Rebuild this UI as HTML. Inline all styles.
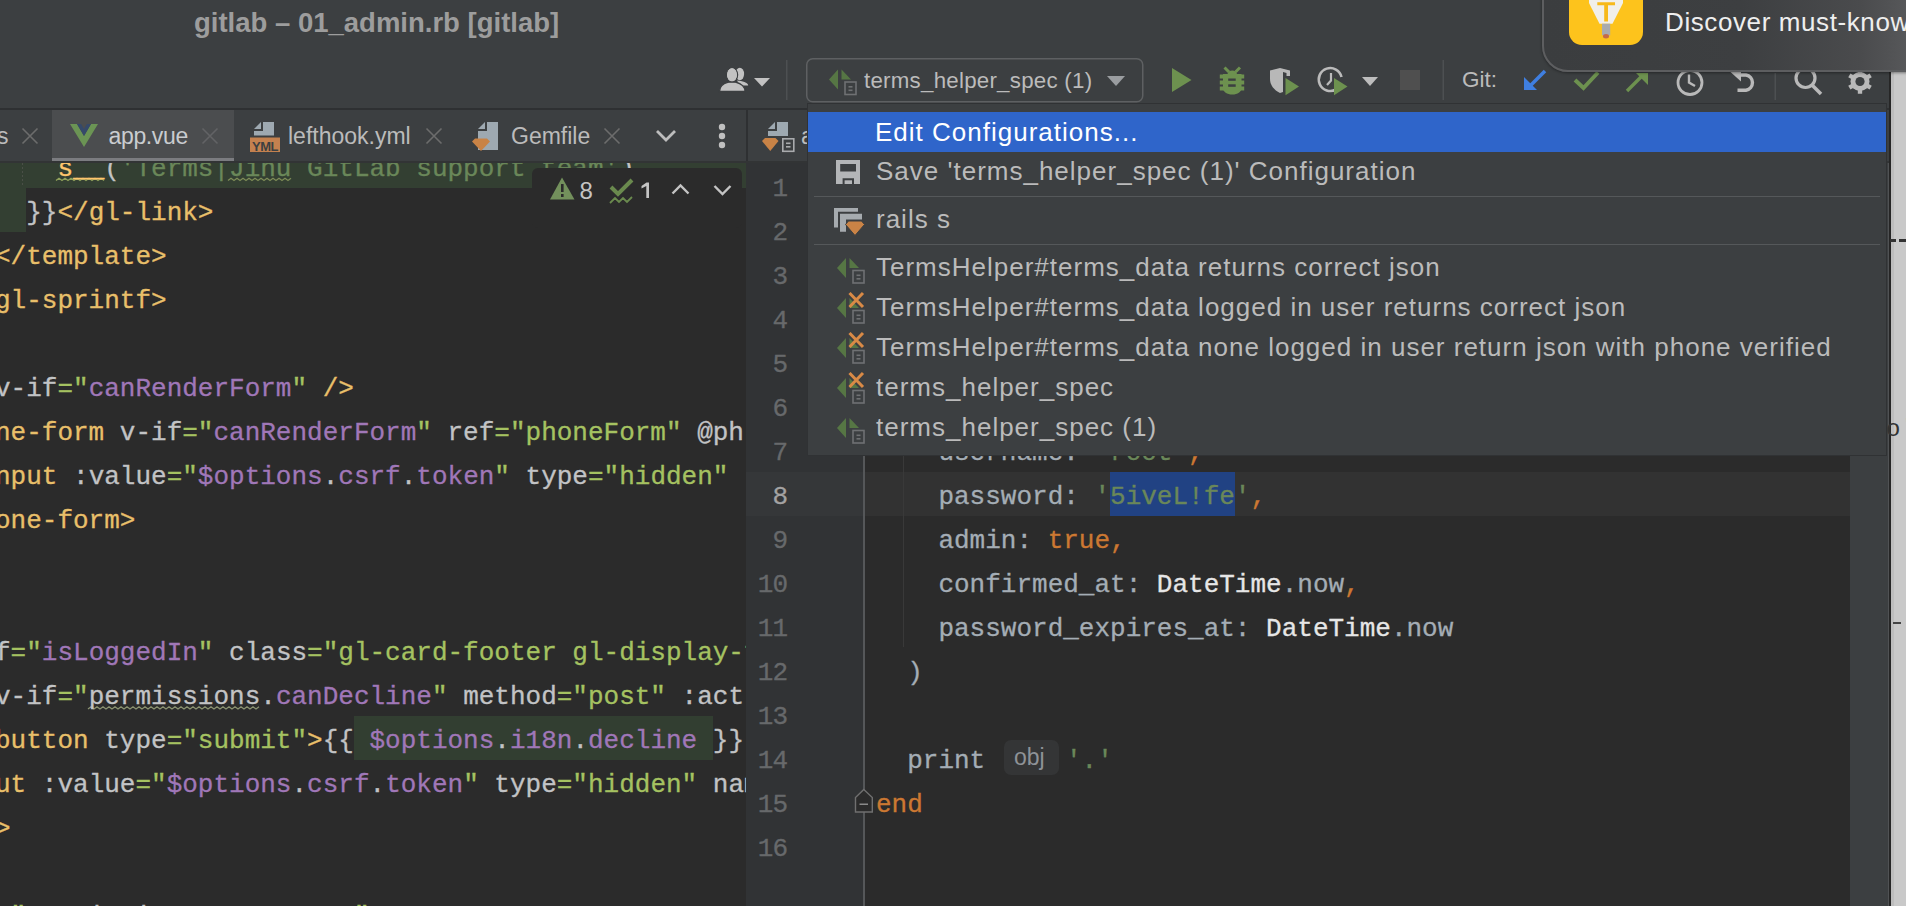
<!DOCTYPE html>
<html><head><meta charset="utf-8">
<style>
*{margin:0;padding:0;box-sizing:border-box}
html,body{width:1906px;height:906px;overflow:hidden;background:#3c3f41}
body{position:relative;font-family:"Liberation Sans",sans-serif;color:#bbbbbb}
.a{position:absolute}
.mono{font-family:"Liberation Mono",monospace;font-size:26px;line-height:44px;white-space:pre;-webkit-text-stroke:0.3px currentColor}
.ui{font-family:"Liberation Sans",sans-serif;white-space:pre}
svg{position:absolute;overflow:visible}
</style></head>
<body>
<!-- left editor -->
<div id="le" class="a" style="left:0;top:163px;width:746px;height:743px;background:#2b2b2b;overflow:hidden">
<div class="a" style="left:0;top:0;width:746px;height:24.5px;background:#333f32"></div>
<div class="a" style="left:0;top:24.5px;width:26px;height:44px;background:#333f32"></div>
<div class="a" style="left:353.8px;top:552.5px;width:358.8px;height:44px;background:#323e31"></div>
<svg class="a" style="left:0;top:0" width="746" height="743">
<path d="M56 17.5 L59.0 15.3 L62.0 17.5 L65.0 15.3 L68.0 17.5 L71.0 15.3 L74.0 17.5 L77.0 15.3 L80.0 17.5 L83.0 15.3 L86.0 17.5 L89.0 15.3 L92.0 17.5 L95.0 15.3 L98.0 17.5 L101.0 15.3 L104.0 17.5" fill="none" stroke="#8fa05a" stroke-width="1.3"/>
<path d="M228 17.5 L231.0 15.3 L234.0 17.5 L237.0 15.3 L240.0 17.5 L243.0 15.3 L246.0 17.5 L249.0 15.3 L252.0 17.5 L255.0 15.3 L258.0 17.5 L261.0 15.3 L264.0 17.5 L267.0 15.3 L270.0 17.5 L273.0 15.3 L276.0 17.5 L279.0 15.3 L282.0 17.5 L285.0 15.3 L288.0 17.5 L291.0 15.3" fill="none" stroke="#7c8a56" stroke-width="1.3"/>
<path d="M88 546 L91.0 543.8 L94.0 546 L97.0 543.8 L100.0 546 L103.0 543.8 L106.0 546 L109.0 543.8 L112.0 546 L115.0 543.8 L118.0 546 L121.0 543.8 L124.0 546 L127.0 543.8 L130.0 546 L133.0 543.8 L136.0 546 L139.0 543.8 L142.0 546 L145.0 543.8 L148.0 546 L151.0 543.8 L154.0 546 L157.0 543.8 L160.0 546 L163.0 543.8 L166.0 546 L169.0 543.8 L172.0 546 L175.0 543.8 L178.0 546 L181.0 543.8 L184.0 546 L187.0 543.8 L190.0 546 L193.0 543.8 L196.0 546 L199.0 543.8 L202.0 546 L205.0 543.8 L208.0 546 L211.0 543.8 L214.0 546 L217.0 543.8 L220.0 546 L223.0 543.8 L226.0 546 L229.0 543.8 L232.0 546 L235.0 543.8 L238.0 546 L241.0 543.8 L244.0 546 L247.0 543.8 L250.0 546 L253.0 543.8 L256.0 546 L259.0 543.8" fill="none" stroke="#8a9270" stroke-width="1.3"/>
<path d="M22.5 0 L22.5 24" stroke="#4a4f47" stroke-width="1" stroke-dasharray="2 2"/>
</svg>
<div class="a mono" style="left:-5.0px;top:-16.5px"><span style="color:#c2c3c5">    </span><span style="color:#ffc66d">s__</span><span style="color:#c2c3c5">(</span><span style="color:#6a8759">&#x27;Terms|Jihu GitLab support team&#x27;</span><span style="color:#c2c3c5">)</span></div>
<div class="a mono" style="left:-5.0px;top:27.5px"><span style="color:#c2c3c5">  }}</span><span style="color:#e8bf6a">&lt;/gl-link&gt;</span></div>
<div class="a mono" style="left:-5.0px;top:71.5px"><span style="color:#e8bf6a">&lt;/template&gt;</span></div>
<div class="a mono" style="left:-5.0px;top:115.5px"><span style="color:#e8bf6a">gl-sprintf&gt;</span></div>
<div class="a mono" style="left:-5.0px;top:203.5px"><span style="color:#c2c3c5">v-if</span><span style="color:#a5c261">=&quot;</span><span style="color:#a077b8">canRenderForm</span><span style="color:#a5c261">&quot;</span><span style="color:#e8bf6a"> /&gt;</span></div>
<div class="a mono" style="left:-5.0px;top:247.5px"><span style="color:#e8bf6a">ne-form</span><span style="color:#c2c3c5"> v-if</span><span style="color:#a5c261">=&quot;</span><span style="color:#a077b8">canRenderForm</span><span style="color:#a5c261">&quot;</span><span style="color:#c2c3c5"> ref</span><span style="color:#a5c261">=&quot;phoneForm&quot;</span><span style="color:#c2c3c5"> @ph</span></div>
<div class="a mono" style="left:-5.0px;top:291.5px"><span style="color:#e8bf6a">nput</span><span style="color:#c2c3c5"> :value</span><span style="color:#a5c261">=&quot;</span><span style="color:#a077b8">$options</span><span style="color:#c2c3c5">.</span><span style="color:#a077b8">csrf</span><span style="color:#c2c3c5">.</span><span style="color:#a077b8">token</span><span style="color:#a5c261">&quot;</span><span style="color:#c2c3c5"> type</span><span style="color:#a5c261">=&quot;hidden&quot;</span></div>
<div class="a mono" style="left:-5.0px;top:335.5px"><span style="color:#e8bf6a">one-form&gt;</span></div>
<div class="a mono" style="left:-5.0px;top:467.5px"><span style="color:#c2c3c5">f</span><span style="color:#a5c261">=&quot;</span><span style="color:#a077b8">isLoggedIn</span><span style="color:#a5c261">&quot;</span><span style="color:#c2c3c5"> class</span><span style="color:#a5c261">=&quot;gl-card-footer gl-display-f</span></div>
<div class="a mono" style="left:-5.0px;top:511.5px"><span style="color:#c2c3c5">v-if</span><span style="color:#a5c261">=&quot;</span><span style="color:#c2c3c5">permissions</span><span style="color:#c2c3c5">.</span><span style="color:#a077b8">canDecline</span><span style="color:#a5c261">&quot;</span><span style="color:#c2c3c5"> method</span><span style="color:#a5c261">=&quot;post&quot;</span><span style="color:#c2c3c5"> :act</span></div>
<div class="a mono" style="left:-5.0px;top:555.5px"><span style="color:#e8bf6a">button</span><span style="color:#c2c3c5"> type</span><span style="color:#a5c261">=&quot;submit&quot;</span><span style="color:#e8bf6a">&gt;</span><span style="color:#c2c3c5">{{</span><span style="color:#a077b8"> $options</span><span style="color:#c2c3c5">.</span><span style="color:#a077b8">i18n</span><span style="color:#c2c3c5">.</span><span style="color:#a077b8">decline </span><span style="color:#c2c3c5">}}</span></div>
<div class="a mono" style="left:-5.0px;top:599.5px"><span style="color:#e8bf6a">ut</span><span style="color:#c2c3c5"> :value</span><span style="color:#a5c261">=&quot;</span><span style="color:#a077b8">$options</span><span style="color:#c2c3c5">.</span><span style="color:#a077b8">csrf</span><span style="color:#c2c3c5">.</span><span style="color:#a077b8">token</span><span style="color:#a5c261">&quot;</span><span style="color:#c2c3c5"> type</span><span style="color:#a5c261">=&quot;hidden&quot;</span><span style="color:#c2c3c5"> nam</span></div>
<div class="a mono" style="left:-5.0px;top:643.5px"><span style="color:#e8bf6a">&gt;</span></div>
<div class="a mono" style="left:-5.0px;top:731.5px"><span style="color:#a5c261">=&quot;</span><span style="color:#c2c3c5">permissions</span><span style="color:#c2c3c5">.</span><span style="color:#a077b8">canAccept</span><span style="color:#a5c261">&quot;</span></div>
</div>
<!-- right gutter -->
<div class="a" style="left:746px;top:163px;width:118px;height:743px;background:#313335;overflow:hidden">
<div class="a" style="left:0;top:309.0px;width:118px;height:44px;background:#353739"></div>
<div class="a mono" style="right:77px;top:4.0px;color:#67696b;text-align:right;letter-spacing:-1.0px">1</div>
<div class="a mono" style="right:77px;top:48.0px;color:#67696b;text-align:right;letter-spacing:-1.0px">2</div>
<div class="a mono" style="right:77px;top:92.0px;color:#67696b;text-align:right;letter-spacing:-1.0px">3</div>
<div class="a mono" style="right:77px;top:136.0px;color:#67696b;text-align:right;letter-spacing:-1.0px">4</div>
<div class="a mono" style="right:77px;top:180.0px;color:#67696b;text-align:right;letter-spacing:-1.0px">5</div>
<div class="a mono" style="right:77px;top:224.0px;color:#67696b;text-align:right;letter-spacing:-1.0px">6</div>
<div class="a mono" style="right:77px;top:268.0px;color:#67696b;text-align:right;letter-spacing:-1.0px">7</div>
<div class="a mono" style="right:77px;top:312.0px;color:#a4a3a3;text-align:right;letter-spacing:-1.0px">8</div>
<div class="a mono" style="right:77px;top:356.0px;color:#67696b;text-align:right;letter-spacing:-1.0px">9</div>
<div class="a mono" style="right:77px;top:400.0px;color:#67696b;text-align:right;letter-spacing:-1.0px">10</div>
<div class="a mono" style="right:77px;top:444.0px;color:#67696b;text-align:right;letter-spacing:-1.0px">11</div>
<div class="a mono" style="right:77px;top:488.0px;color:#67696b;text-align:right;letter-spacing:-1.0px">12</div>
<div class="a mono" style="right:77px;top:532.0px;color:#67696b;text-align:right;letter-spacing:-1.0px">13</div>
<div class="a mono" style="right:77px;top:576.0px;color:#67696b;text-align:right;letter-spacing:-1.0px">14</div>
<div class="a mono" style="right:77px;top:620.0px;color:#67696b;text-align:right;letter-spacing:-1.0px">15</div>
<div class="a mono" style="right:77px;top:664.0px;color:#67696b;text-align:right;letter-spacing:-1.0px">16</div>
</div>
<div class="a" style="left:863px;top:163px;width:1.5px;height:743px;background:#555759"></div>
<!-- right editor -->
<div id="re" class="a" style="left:865px;top:163px;width:985px;height:743px;background:#2b2b2b;overflow:hidden">
<div class="a" style="left:0;top:309.0px;width:985px;height:44px;background:#323232"></div>
<div class="a" style="left:245.0px;top:309.0px;width:124.8px;height:44px;background:#214283"></div>
<div class="a" style="left:38px;top:293px;width:1px;height:191px;background:#393939"></div>
<div class="a mono" style="left:11.0px;top:268.0px"><span style="color:#a4adb5">    username: </span><span style="color:#6a8759">&#x27;root&#x27;</span><span style="color:#cc7832">,</span></div>
<div class="a mono" style="left:11.0px;top:312.0px"><span style="color:#a4adb5">    password: </span><span style="color:#6a8759">&#x27;5iveL!fe&#x27;</span><span style="color:#cc7832">,</span></div>
<div class="a mono" style="left:11.0px;top:356.0px"><span style="color:#a4adb5">    admin: </span><span style="color:#cc7832">true</span><span style="color:#cc7832">,</span></div>
<div class="a mono" style="left:11.0px;top:400.0px"><span style="color:#a4adb5">    confirmed_at: </span><span style="color:#e6e6e6">DateTime</span><span style="color:#a4adb5">.now</span><span style="color:#cc7832">,</span></div>
<div class="a mono" style="left:11.0px;top:444.0px"><span style="color:#a4adb5">    password_expires_at: </span><span style="color:#e6e6e6">DateTime</span><span style="color:#a4adb5">.now</span></div>
<div class="a mono" style="left:11.0px;top:488.0px"><span style="color:#a4adb5">  )</span></div>
<div class="a mono" style="left:11.0px;top:576.0px"><span style="color:#a4adb5">  print</span></div>
<div class="a mono" style="left:11.0px;top:620.0px"><span style="color:#cc7832">end</span></div>
<div class="a" style="left:139px;top:577px;width:55px;height:35px;background:#343536;border-radius:7px"></div>
<div class="a ui" style="left:149px;top:577px;font-size:23px;line-height:35px;color:#8e9297">obj</div>
<div class="a mono" style="left:201px;top:576.0px;color:#6a8759">'.'</div>
</div>
<svg class="a" style="left:0;top:0" width="1906" height="906"><path d="M863.8 789.5 L872.3 797.5 L872.3 812 L855.5 812 L855.5 797.5 Z" fill="#2b2b2b" stroke="#707070" stroke-width="1.4"/><rect x="859.5" y="803.5" width="8.5" height="1.5" fill="#8a8a8a"/></svg>
<!-- right strip -->
<div class="a" style="left:1850px;top:110px;width:38px;height:796px;background:#3c3f41"></div>
<div class="a" style="left:1888px;top:0;width:1px;height:906px;background:#505254"></div><div class="a" style="left:1889px;top:0;width:2px;height:906px;background:#262626"></div>
<div class="a" style="left:1891px;top:0;width:15px;height:906px;background:#c9c9c9"></div>
<div class="a" style="left:1891px;top:0;width:3px;height:906px;background:#bdbdbd"></div>
<div class="a" style="left:1890px;top:239px;width:6px;height:2.5px;background:#333"></div>
<div class="a" style="left:1899px;top:239px;width:7px;height:2.5px;background:#333"></div>
<div class="a" style="left:1893px;top:622px;width:8px;height:2px;background:#444"></div>
<div class="a" style="left:1886px;top:418px;font-family:Liberation Mono;font-size:24px;line-height:24px;color:#333">o'</div>

<!-- title bar + toolbar -->
<div class="a" style="left:0;top:0;width:1889px;height:108px;background:#3c3f41"></div>
<div class="a ui" style="left:194px;top:5px;font-size:27.5px;font-weight:700;color:#9d9d9d;line-height:36px">gitlab – 01_admin.rb [gitlab]</div>
<svg class="a" style="left:0;top:0" width="1906" height="110" viewBox="0 0 1906 110">
<g fill="#c2c2c2"><ellipse cx="739.8" cy="74" rx="4.3" ry="6.2"/><path d="M737 80.5 C742 81 748.2 82.5 748.2 85.5 L740 85.5 Z"/><g stroke="#3c3f41" stroke-width="1.3"><ellipse cx="732" cy="74.8" rx="5.6" ry="7.1"/><path d="M719.5 91.5 C719.5 86 723.5 83.5 728.5 82.2 L735.5 82.2 C740.5 83.5 745 86 745 91.5 Z"/></g><ellipse cx="732" cy="74.8" rx="5.0" ry="6.5"/></g>
<path d="M754 78 L770 78 L762 86.5 Z" fill="#c2c2c2"/>
<rect x="786" y="60" width="1.5" height="40" fill="#4d5052"/>
<rect x="806.75" y="58.75" width="336" height="43" rx="6" fill="none" stroke="#5e6062" stroke-width="1.5"/>
<path d="M838 69.5 L829 79.5 L838 89.5 Z" fill="#5f8a45" opacity="0.75"/><path d="M841.5 69.5 L851 79.5 L841.5 79.5 Z" fill="#5f8a45" opacity="0.75"/><rect x="845" y="82.0" width="11" height="12.5" fill="none" stroke="#6f7173" stroke-width="1.6"/><rect x="848.5" y="86.0" width="4" height="1.6" fill="#6f7173"/><rect x="848.5" y="89.5" width="4" height="1.6" fill="#6f7173"/>
<path d="M1107 76 L1125 76 L1116 86 Z" fill="#9a9da0"/>
<path d="M1172 68 L1191.5 80 L1172 92 Z" fill="#6d914f"/>
<g fill="#6d914f"><path d="M1224.5 67.5 L1229 72 M1240 67.5 L1235.5 72" stroke="#6d914f" stroke-width="3"/><path d="M1227.5 74 C1228 71.5 1230 70.5 1232.3 70.5 C1234.5 70.5 1236.5 71.5 1237 74 Z"/><path d="M1223 74 L1241.5 74 L1241.5 88 C1241.5 92 1237.5 94.5 1232.3 94.5 C1227 94.5 1223 92 1223 88 Z"/><rect x="1219.8" y="74.5" width="24.4" height="4"/><rect x="1219.8" y="80.5" width="24.4" height="4"/><rect x="1219.8" y="86.5" width="24.4" height="4"/></g>
<rect x="1228.2" y="78.5" width="7.5" height="2.3" fill="#3c3f41"/><rect x="1228.2" y="84.3" width="7.5" height="2.5" fill="#3c3f41"/>
<path d="M1270 70.5 L1280 68 L1290 70.5 L1290 76 L1286.5 76 L1286.5 73 L1283 72 L1283 92 L1280 93 C1274 90 1270 85 1270 79 Z" fill="#b8b8b8"/>
<path d="M1285.5 78 L1299 86.5 L1285.5 95.3 Z" fill="#6d914f"/>
<path d="M1336 89.5 A11.5 11.5 0 1 1 1341.5 77" fill="none" stroke="#bbbbbb" stroke-width="2.6"/>
<path d="M1331 73 L1331 80.5 L1327 85" fill="none" stroke="#bbbbbb" stroke-width="2.2"/>
<path d="M1334 78 L1347.5 86.5 L1334 95.3 Z" fill="#6d914f"/>
<path d="M1362 77 L1378 77 L1370 86 Z" fill="#bdbdbd"/>
<rect x="1400" y="70" width="20" height="20" fill="#4f4f4f"/>
<rect x="1442.5" y="60" width="1.5" height="40" fill="#4d5052"/>
<path d="M1545 71 L1531 85" stroke="#3f7fe0" stroke-width="3.6"/>
<path d="M1524 77 L1524 90 L1537 90 Z" fill="#3f7fe0"/>
<path d="M1575 80 L1583.5 88 L1598 72.5" fill="none" stroke="#6d914f" stroke-width="4"/>
<path d="M1627 91 L1643 75" stroke="#6d914f" stroke-width="3.4"/>
<path d="M1636 73 L1648 73 L1648 85 Z" fill="#6d914f"/>
<circle cx="1690" cy="82.5" r="12" fill="none" stroke="#b9b9b9" stroke-width="2.8"/>
<path d="M1689 74.5 L1689 82.5 L1695 86" fill="none" stroke="#b9b9b9" stroke-width="2.4"/>
<path d="M1738 75 L1746 75 A7.7 7.7 0 0 1 1746 90.2 L1737.5 90.2" fill="none" stroke="#b9b9b9" stroke-width="3.4"/>
<path d="M1730.5 72 L1741 72 L1741 81.5 Z" fill="#b9b9b9"/>
<rect x="1774.5" y="73" width="1.5" height="27" fill="#4d5052"/>
<circle cx="1805.5" cy="78" r="9.5" fill="none" stroke="#b9b9b9" stroke-width="3.2"/>
<path d="M1812 85 L1821 94" stroke="#b9b9b9" stroke-width="3.6"/>
<path d="M1857.82 72.77 L1857.83 69.19 L1862.17 69.19 L1862.18 72.77 L1866.47 75.25 L1869.58 73.47 L1871.75 77.22 L1868.65 79.02 L1868.65 83.98 L1871.75 85.78 L1869.58 89.53 L1866.47 87.75 L1862.18 90.23 L1862.17 93.81 L1857.83 93.81 L1857.82 90.23 L1853.53 87.75 L1850.42 89.53 L1848.25 85.78 L1851.35 83.98 L1851.35 79.02 L1848.25 77.22 L1850.42 73.47 L1853.53 75.25 Z" fill="#b9b9b9"/><circle cx="1860" cy="81.5" r="9.5" fill="#b9b9b9"/><circle cx="1860" cy="81.5" r="4.6" fill="#3c3f41"/>
</svg>
<div class="a ui" style="left:864px;top:67px;font-size:22.3px;line-height:28px;color:#bbbbbb;letter-spacing:0.25px">terms_helper_spec (1)</div>
<div class="a ui" style="left:1462px;top:66px;font-size:22.5px;line-height:28px;color:#bbbbbb">Git:</div>
<div class="a" style="left:0;top:108px;width:1889px;height:2px;background:#2e3032"></div>

<!-- tab bar -->
<div class="a" style="left:0;top:110px;width:1889px;height:52px;background:#3c3f41"></div>
<div class="a" style="left:52px;top:110px;width:182px;height:48px;background:#4b4d4f"></div>
<div class="a" style="left:52px;top:158px;width:182px;height:4px;background:#7b7c80"></div>
<div class="a" style="left:746px;top:110px;width:2px;height:52px;background:#2e3032"></div>
<svg class="a" style="left:0;top:0" width="1906" height="170" viewBox="0 0 1906 170">
<path d="M22.5 128.5 L37.5 143.5 M37.5 128.5 L22.5 143.5" stroke="#6c6c6c" stroke-width="1.6"/>
<path d="M202.5 128.5 L217.5 143.5 M217.5 128.5 L202.5 143.5" stroke="#626365" stroke-width="1.6"/>
<path d="M426.5 128.5 L441.5 143.5 M441.5 128.5 L426.5 143.5" stroke="#6c6c6c" stroke-width="1.6"/>
<path d="M604.5 128.5 L619.5 143.5 M619.5 128.5 L604.5 143.5" stroke="#6c6c6c" stroke-width="1.6"/>
<path d="M70 124 L77 124 L84 136 L91 124 L98 124 L84 147 Z" fill="#6b9454"/>
<path d="M77 124 L81 124 L84 129 L87 124 L91 124 L84 136 Z" fill="#35496a"/>
<path d="M254 129 L261 122 L261 129 Z" fill="#9ea9b1"/><path d="M263 122 L274 122 L274 135.5 L254 135.5 L254 131 L263 131 Z" fill="#9ea9b1"/>
<rect x="250" y="137.5" width="30" height="14.5" fill="#c4814f"/>
<text x="265" y="150.5" text-anchor="middle" font-family="Liberation Sans" font-size="13" font-weight="700" fill="#3c3f41" letter-spacing="-0.5">YML</text>
<path d="M478 129 L485 122 L485 129 Z" fill="#9ea9b1"/><path d="M487 122 L498 122 L498 150 L478 150 L478 131 L487 131 Z" fill="#9ea9b1"/>
<path d="M472 141.5 L475 138.5 L487 138.5 L490 141.5 L481.0 151.0 Z" fill="#c98346"/>
<path d="M657 131 L666 140 L675 131" fill="none" stroke="#bdbdbd" stroke-width="2.8"/>
<circle cx="722" cy="127" r="3.2" fill="#c0c0c0"/>
<circle cx="722" cy="136" r="3.2" fill="#c0c0c0"/>
<circle cx="722" cy="145" r="3.2" fill="#c0c0c0"/>
<path d="M768 129 L775 122 L775 129 Z" fill="#9ea9b1"/><path d="M777 122 L788 122 L788 136 L768 136 L768 131 L777 131 Z" fill="#9ea9b1"/>
<path d="M762 141 L765 138 L775.5 138 L778.5 141 L770.25 151 Z" fill="#c98346"/>
<rect x="782.8" y="138.8" width="11" height="12.5" fill="none" stroke="#a9abad" stroke-width="1.6"/>
<rect x="786" y="142.5" width="4.5" height="1.6" fill="#a9abad"/><rect x="786" y="146" width="4.5" height="1.6" fill="#a9abad"/>
</svg>
<div class="a ui" style="left:-3px;top:122px;font-size:23px;line-height:28px;color:#bbbbbb">s</div>
<div class="a ui" style="left:108.5px;top:122px;font-size:23px;line-height:28px;color:#c9ccd0;letter-spacing:-0.35px">app.vue</div>
<div class="a ui" style="left:288px;top:122px;font-size:23px;line-height:28px;color:#bbbbbb">lefthook.yml</div>
<div class="a ui" style="left:511px;top:122px;font-size:23px;line-height:28px;color:#bbbbbb">Gemfile</div>
<div class="a ui" style="left:801px;top:122px;font-size:23px;line-height:28px;color:#bbbbbb">a</div>
<div class="a" style="left:0;top:161px;width:1889px;height:2px;background:#323435"></div>

<!-- floating inspection widget -->
<div class="a" style="left:532px;top:168px;width:210px;height:60px;background:#2b2b2b;border-radius:6px"></div>
<svg class="a" style="left:0;top:0" width="1906" height="240" viewBox="0 0 1906 240">
<path d="M562 177.5 L574.5 199.5 L550 199.5 Z" fill="#73905c"/>
<rect x="561" y="184" width="2.6" height="8" fill="#2b2b2b"/><rect x="561" y="194" width="2.6" height="3" fill="#2b2b2b"/>
<path d="M611 187 L618 194 L632 180" fill="none" stroke="#6a8a4e" stroke-width="4"/>
<path d="M610 203 L615 198 L619 202 L623 198 L627 202 L632 197" fill="none" stroke="#6a8a4e" stroke-width="1.8"/>
<path d="M672.5 193.5 L680.5 185.5 L688.5 193.5" fill="none" stroke="#c4c4c4" stroke-width="2.4"/>
<path d="M714.5 186 L722.5 194 L730.5 186" fill="none" stroke="#c4c4c4" stroke-width="2.4"/>
</svg>
<div class="a ui" style="left:579.5px;top:177px;font-size:24px;line-height:28px;color:#c4c4c4">8</div>
<svg class="a" style="left:0;top:0" width="700" height="220"><path d="M646.5 182.5 L649 182.5 L649 198 L646.3 198 L646.3 186 L641.5 188.5 L641.5 186 Z" fill="#c4c4c4"/></svg>

<!-- popup -->
<div id="pop" class="a" style="left:807px;top:103px;width:1080px;height:353px;background:#3c3f41;border:1px solid #303234">
<div class="a" style="left:0px;top:8px;width:1078px;height:40px;background:#2f65ca"></div>
<div class="a" style="left:6px;top:92px;width:1066px;height:1px;background:#55585a"></div>
<div class="a" style="left:6px;top:140px;width:1066px;height:1px;background:#55585a"></div>
<div class="a ui" style="left:67px;top:8px;font-size:26px;line-height:40px;color:#ffffff;letter-spacing:1.0px">Edit Configurations...</div>
<div class="a ui" style="left:68px;top:47px;font-size:26px;line-height:40px;color:#bbbbbb;letter-spacing:1.0px">Save &#x27;terms_helper_spec (1)&#x27; Configuration</div>
<div class="a ui" style="left:68px;top:95px;font-size:26px;line-height:40px;color:#bbbbbb;letter-spacing:1.0px">rails s</div>
<div class="a ui" style="left:68px;top:143px;font-size:26px;line-height:40px;color:#bbbbbb;letter-spacing:1.0px">TermsHelper#terms_data returns correct json</div>
<div class="a ui" style="left:68px;top:183px;font-size:26px;line-height:40px;color:#bbbbbb;letter-spacing:1.0px">TermsHelper#terms_data logged in user returns correct json</div>
<div class="a ui" style="left:68px;top:223px;font-size:26px;line-height:40px;color:#bbbbbb;letter-spacing:1.0px">TermsHelper#terms_data none logged in user return json with phone verified</div>
<div class="a ui" style="left:68px;top:263px;font-size:26px;line-height:40px;color:#bbbbbb;letter-spacing:1.0px">terms_helper_spec</div>
<div class="a ui" style="left:68px;top:303px;font-size:26px;line-height:40px;color:#bbbbbb;letter-spacing:1.0px">terms_helper_spec (1)</div>
<svg class="a" style="left:-808px;top:-104px" width="1906" height="500" viewBox="0 0 1906 500">
<path d="M836 160 L860 160 L860 184 L836 184 Z M840.2 164 L840.2 171.5 L856 171.5 L856 164 Z M842.6 178.2 L842.6 184 L854 184 L854 178.2 Z" fill="#b4b6b8" fill-rule="evenodd"/>
<rect x="844.6" y="180.3" width="7.4" height="3.7" fill="#b4b6b8"/>
<path d="M834 208 L858 208 L858 211.8 L838 211.8 L838 227.5 L834 227.5 Z" fill="#a6abaf"/>
<path d="M840 213.7 L862 213.7 L862 219.5 L846 219.5 L846 231.8 L840 231.8 Z" fill="#a6abaf"/>
<path d="M845.5 224.5 L848.5 221 L861.5 221 L864.5 224.5 L855 235.5 Z" fill="#c98346" stroke="#3c3f41" stroke-width="1"/>
<path d="M846 258 L837 268 L846 278 Z" fill="#5f8a45" opacity="0.75"/><path d="M849.5 258 L859 268 L849.5 268 Z" fill="#5f8a45" opacity="0.75"/><rect x="853" y="270.5" width="11" height="12.5" fill="none" stroke="#6f7173" stroke-width="1.6"/><rect x="856.5" y="274.5" width="4" height="1.6" fill="#6f7173"/><rect x="856.5" y="278" width="4" height="1.6" fill="#6f7173"/>
<path d="M846 298 L837 308 L846 318 Z" fill="#5f8a45" opacity="0.75"/><path d="M849.5 298 L859 308 L849.5 308 Z" fill="#5f8a45" opacity="0.75"/><rect x="853" y="310.5" width="11" height="12.5" fill="none" stroke="#6f7173" stroke-width="1.6"/><rect x="856.5" y="314.5" width="4" height="1.6" fill="#6f7173"/><rect x="856.5" y="318" width="4" height="1.6" fill="#6f7173"/><path d="M849.5 293 L863 307 M863 293 L849.5 307" stroke="#d98a46" stroke-width="3"/>
<path d="M846 338 L837 348 L846 358 Z" fill="#5f8a45" opacity="0.75"/><path d="M849.5 338 L859 348 L849.5 348 Z" fill="#5f8a45" opacity="0.75"/><rect x="853" y="350.5" width="11" height="12.5" fill="none" stroke="#6f7173" stroke-width="1.6"/><rect x="856.5" y="354.5" width="4" height="1.6" fill="#6f7173"/><rect x="856.5" y="358" width="4" height="1.6" fill="#6f7173"/><path d="M849.5 333 L863 347 M863 333 L849.5 347" stroke="#d98a46" stroke-width="3"/>
<path d="M846 378 L837 388 L846 398 Z" fill="#5f8a45" opacity="0.75"/><path d="M849.5 378 L859 388 L849.5 388 Z" fill="#5f8a45" opacity="0.75"/><rect x="853" y="390.5" width="11" height="12.5" fill="none" stroke="#6f7173" stroke-width="1.6"/><rect x="856.5" y="394.5" width="4" height="1.6" fill="#6f7173"/><rect x="856.5" y="398" width="4" height="1.6" fill="#6f7173"/><path d="M849.5 373 L863 387 M863 373 L849.5 387" stroke="#d98a46" stroke-width="3"/>
<path d="M846 418 L837 428 L846 438 Z" fill="#5f8a45" opacity="0.75"/><path d="M849.5 418 L859 428 L849.5 428 Z" fill="#5f8a45" opacity="0.75"/><rect x="853" y="430.5" width="11" height="12.5" fill="none" stroke="#6f7173" stroke-width="1.6"/><rect x="856.5" y="434.5" width="4" height="1.6" fill="#6f7173"/><rect x="856.5" y="438" width="4" height="1.6" fill="#6f7173"/>
</svg>
</div>
<div class="a" style="left:1542px;top:-30px;width:400px;height:102px;border-radius:26px;border:2px solid #5d5e60;background:linear-gradient(90deg,#3b3d3f 0%,#3d3f41 50%,#4a4b4d 80%,#5f6062 100%);box-shadow:0 1px 3px rgba(0,0,0,0.4)"></div>
<div class="a" style="left:1568.8px;top:-30px;width:74.5px;height:74.7px;border-radius:13px;background:#fdc31c"></div>
<svg class="a" style="left:0;top:0" width="1906" height="80" viewBox="0 0 1906 80">
<path d="M1589 -2 L1623 -2 L1623 3 L1612.5 23.7 L1599.5 23.7 L1589 3 Z" fill="#f1efea"/>
<path d="M1597.3 2.2 L1615 2.2 L1615 5.2 L1608 5.2 L1608 21.5 L1604.2 21.5 L1604.2 5.2 L1597.3 5.2 Z" fill="#f7b91a"/>
<rect x="1602" y="23.7" width="8.2" height="11.6" fill="#a9abae"/>
<ellipse cx="1606" cy="36.3" rx="3" ry="2.2" fill="#c46a4a"/>
</svg>
<div class="a ui" style="left:1665px;top:6px;font-size:26px;line-height:32px;color:#eeeeee;letter-spacing:0.6px">Discover must-know</div>
<div class="a ui" style="left:1665px;top:-25px;font-size:26px;line-height:32px;color:#9a9a9a;letter-spacing:0.6px;font-weight:700">Learn IDE features: tip of the day</div>
</body></html>
